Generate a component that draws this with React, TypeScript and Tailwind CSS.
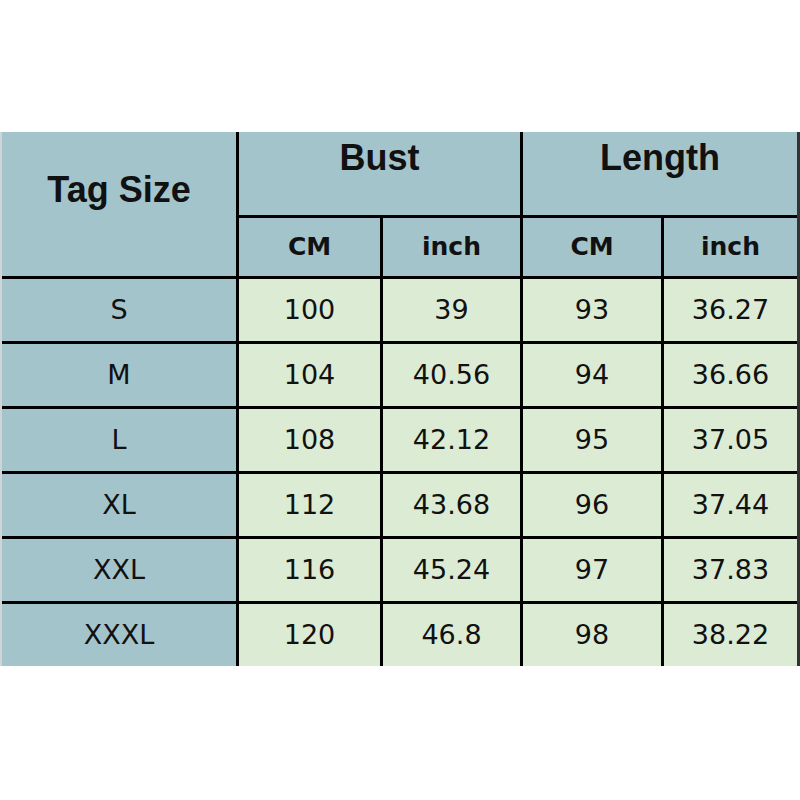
import React from "react";

const rows = [
  ["S", "100", "39", "93", "36.27"],
  ["M", "104", "40.56", "94", "36.66"],
  ["L", "108", "42.12", "95", "37.05"],
  ["XL", "112", "43.68", "96", "37.44"],
  ["XXL", "116", "45.24", "97", "37.83"],
  ["XXXL", "120", "46.8", "98", "38.22"],
];

const blue = "bg-[#a4c4cb]";
const green = "bg-[#dcebd4]";
const valFont = "font-['DejaVu_Sans',sans-serif] text-[27px] text-[#111]";
const headFont = "font-['Liberation_Sans',Arial,sans-serif] font-bold text-[36px] leading-none text-[#111]";
const subFont = "font-['DejaVu_Sans',sans-serif] font-bold text-[25px] text-[#111]";

export default function App() {
  return (
    <div className="w-[800px] h-[800px] bg-white pt-[132px]">
      <div className="grid grid-cols-[234px_141px_137px_138px_1fr] grid-rows-[83px_58px_repeat(6,62px)] gap-[3px] bg-black border-l-2 border-l-[#cdd5d7] border-r-[3px] border-r-[#333]">
        <div className={`${blue} row-span-2 flex justify-center pt-[40px] ${headFont}`}>Tag Size</div>
        <div className={`${blue} col-span-2 flex justify-center pt-[8px] ${headFont}`}>Bust</div>
        <div className={`${blue} col-span-2 flex justify-center pt-[8px] ${headFont}`}>Length</div>
        <div className={`${blue} flex items-center justify-center ${subFont}`}>CM</div>
        <div className={`${blue} flex items-center justify-center ${subFont}`}>inch</div>
        <div className={`${blue} flex items-center justify-center ${subFont}`}>CM</div>
        <div className={`${blue} flex items-center justify-center ${subFont}`}>inch</div>
        {rows.map((r) => (
          <React.Fragment key={r[0]}>
            <div className={`${blue} flex items-center justify-center ${valFont}`}>{r[0]}</div>
            {r.slice(1).map((v, i) => (
              <div key={i} className={`${green} flex items-center justify-center ${valFont}`}>{v}</div>
            ))}
          </React.Fragment>
        ))}
      </div>
    </div>
  );
}
